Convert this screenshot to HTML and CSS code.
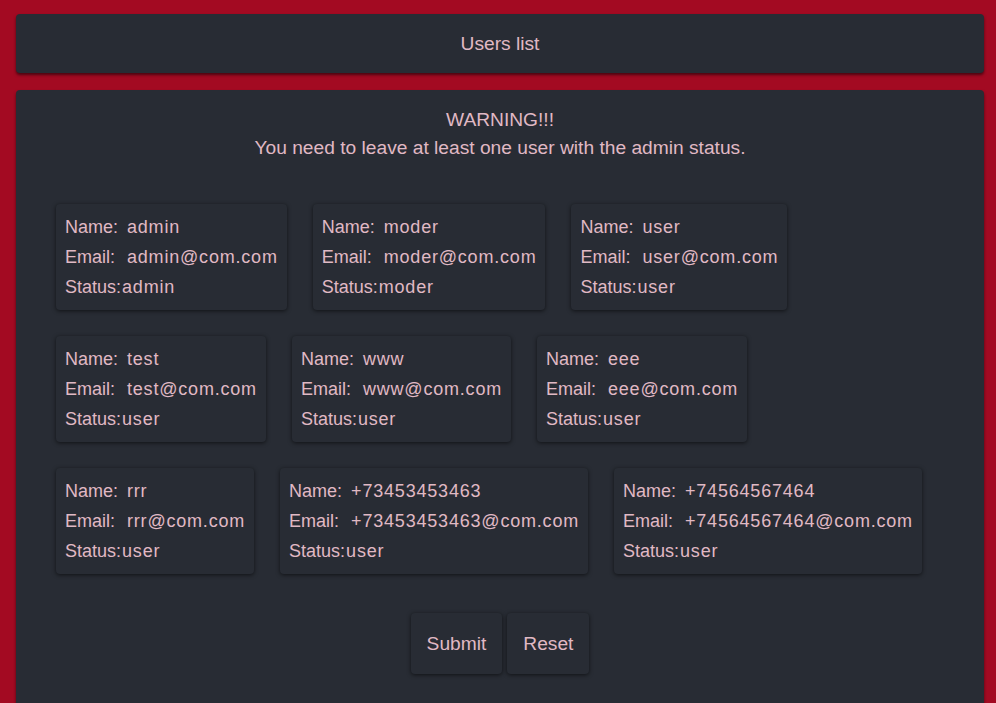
FILE: index.html
```html
<!DOCTYPE html>
<html lang="en">
<head>
<meta charset="utf-8">
<title>Users list</title>
<link rel="stylesheet" href="styles.css">
</head>
<body>
<header class="panel header">Users list</header>
<main class="panel main">
  <div class="warning">
    <div>WARNING!!!</div>
    <div>You need to leave at least one user with the admin status.</div>
  </div>
  <div class="users">
    <div class="user">
      <div class="row"><span class="label">Name:</span><span class="value">admin</span></div>
      <div class="row"><span class="label">Email:</span><span class="value">admin@com.com</span></div>
      <div class="row"><span class="label status">Status:</span><span class="value">admin</span></div>
    </div>
    <div class="user">
      <div class="row"><span class="label">Name:</span><span class="value">moder</span></div>
      <div class="row"><span class="label">Email:</span><span class="value">moder@com.com</span></div>
      <div class="row"><span class="label status">Status:</span><span class="value">moder</span></div>
    </div>
    <div class="user">
      <div class="row"><span class="label">Name:</span><span class="value">user</span></div>
      <div class="row"><span class="label">Email:</span><span class="value">user@com.com</span></div>
      <div class="row"><span class="label status">Status:</span><span class="value">user</span></div>
    </div>
    <div class="user">
      <div class="row"><span class="label">Name:</span><span class="value">test</span></div>
      <div class="row"><span class="label">Email:</span><span class="value">test@com.com</span></div>
      <div class="row"><span class="label status">Status:</span><span class="value">user</span></div>
    </div>
    <div class="user">
      <div class="row"><span class="label">Name:</span><span class="value">www</span></div>
      <div class="row"><span class="label">Email:</span><span class="value">www@com.com</span></div>
      <div class="row"><span class="label status">Status:</span><span class="value">user</span></div>
    </div>
    <div class="user">
      <div class="row"><span class="label">Name:</span><span class="value">eee</span></div>
      <div class="row"><span class="label">Email:</span><span class="value">eee@com.com</span></div>
      <div class="row"><span class="label status">Status:</span><span class="value">user</span></div>
    </div>
    <div class="user">
      <div class="row"><span class="label">Name:</span><span class="value">rrr</span></div>
      <div class="row"><span class="label">Email:</span><span class="value">rrr@com.com</span></div>
      <div class="row"><span class="label status">Status:</span><span class="value">user</span></div>
    </div>
    <div class="user">
      <div class="row"><span class="label">Name:</span><span class="value">+73453453463</span></div>
      <div class="row"><span class="label">Email:</span><span class="value">+73453453463@com.com</span></div>
      <div class="row"><span class="label status">Status:</span><span class="value">user</span></div>
    </div>
    <div class="user">
      <div class="row"><span class="label">Name:</span><span class="value">+74564567464</span></div>
      <div class="row"><span class="label">Email:</span><span class="value">+74564567464@com.com</span></div>
      <div class="row"><span class="label status">Status:</span><span class="value">user</span></div>
    </div>
  </div>
  <div class="actions">
    <button class="btn" type="button">Submit</button>
    <button class="btn" type="button">Reset</button>
  </div>
</main>
</body>
</html>
```

FILE: styles.css
```css
html, body {
  margin: 0;
  padding: 0;
}
body {
  background: #a30a22;
  font-family: "Liberation Sans", Arial, sans-serif;
  font-size: 18px;
  color: #e0b9c4;
  padding: 14px 12px 0 16px;
  display: flex;
  flex-direction: column;
  gap: 17px;
  min-height: 703px;
  box-sizing: border-box;
}
.panel {
  background: #282c34;
  border-radius: 4px;
  box-shadow: 0 2px 3px rgba(0, 0, 0, 0.55);
}
.header {
  height: 59px;
  display: flex;
  align-items: center;
  justify-content: center;
  font-size: 19.2px;
}
.main {
  flex: 1;
  padding: 16px 40px 40px;
  border-radius: 4px 4px 0 0;
}
.warning {
  text-align: center;
  line-height: 28px;
  font-size: 19.2px;
}
.users {
  margin-top: 42px;
  display: flex;
  flex-wrap: wrap;
  column-gap: 26px;
  row-gap: 26px;
}
.user {
  background: #282c34;
  border-radius: 4px;
  box-shadow: 0 1px 4px rgba(0, 0, 0, 0.6);
  padding: 8px 9px 8px;
  line-height: 30px;
}
.row {
  display: flex;
  white-space: nowrap;
}
.label {
  display: inline-block;
  width: 62px;
}
.label.status {
  width: auto;
  margin-right: 1px;
}
.value {
  letter-spacing: 0.8px;
}
.actions {
  margin-top: 39px;
  display: flex;
  justify-content: center;
  gap: 5px;
}
.btn {
  font-family: inherit;
  font-size: 19.2px;
  color: inherit;
  background: #282c34;
  border: none;
  border-radius: 4px;
  box-shadow: 0 1px 4px rgba(0, 0, 0, 0.6);
  padding: 0 16px;
  height: 61px;
  cursor: pointer;
}
```
